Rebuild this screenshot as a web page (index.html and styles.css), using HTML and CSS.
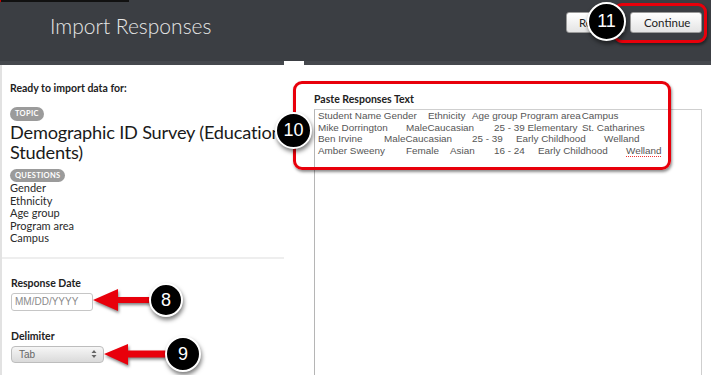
FILE: index.html
```html
<!DOCTYPE html>
<html lang="en">

<head>
  <meta charset="UTF-8">
  <meta name="viewport" content="width=device-width, initial-scale=1.0">
  <title>Import Responses</title>
  <link rel="stylesheet" href="styles.css">
</head>

<body>
  <header class="topbar">
    <h1>Import Responses</h1>
    <div class="actions">
      <button class="btn btn-reset">Reset</button>
      <button class="btn btn-continue">Continue</button>
    </div>
  </header>

  <main class="layout">
    <aside class="summary">
      <section class="target">
        <p class="lead">Ready to import data for:</p>
        <span class="pill">TOPIC</span>
        <h2 class="survey">Demographic ID Survey (Education Students)</h2>
        <span class="pill pill-questions">QUESTIONS</span>
        <ul class="questions">
          <li>Gender</li>
          <li>Ethnicity</li>
          <li>Age group</li>
          <li>Program area</li>
          <li>Campus</li>
        </ul>
      </section>

      <section class="options">
        <label class="field-label" for="response-date">Response Date</label>
        <input class="date-input" id="response-date" type="text" placeholder="MM/DD/YYYY">

        <label class="field-label field-label-delim">Delimiter</label>
        <div class="select">
          <span>Tab</span>
          <svg class="select-arrows" width="6" height="10" viewBox="0 0 6 10">
            <path d="M3 1 L5.5 4 H0.5 Z M3 9 L5.5 6 H0.5 Z" fill="#666" />
          </svg>
        </div>
      </section>
    </aside>

    <section class="paste">
      <label class="field-label">Paste Responses Text</label>
      <div class="textbox">Student Name Gender	Ethnicity	Age group Program area<span class="snug">Campus</span>
Mike Dorrington	MaleCaucasian	25 - 39 Elementary	St. Catharines
Ben Irvine	MaleCaucasian	25 - 39	Early Childhood	Welland
Amber Sweeny	Female	Asian	16 - 24	Early Childhood	<span class="misspelt">Welland</span></div>
    </section>
  </main>

  <!-- tutorial callouts drawn over the page -->
  <div class="callout-box box-paste"></div>
  <div class="callout-box box-continue"></div>

  <svg class="arrow arrow-date" width="64" height="28" viewBox="0 0 64 28">
    <polygon points="3,14 28,3 28,11 62,11 62,17 28,17 28,25" fill="#e8000b" />
  </svg>
  <svg class="arrow arrow-delim" width="72" height="28" viewBox="0 0 72 28">
    <polygon points="3,14 27,4 27,10.5 70,10.5 70,17.5 27,17.5 27,25" fill="#e8000b" />
  </svg>

  <span class="badge badge-8">8</span>
  <span class="badge badge-9">9</span>
  <span class="badge badge-10">10</span>
  <span class="badge badge-11">11</span>
</body>

</html>
```

FILE: styles.css
```css
* {
  box-sizing: border-box;
}

html,
body {
  margin: 0;
  height: 100%;
  overflow: hidden;
}

body {
  font-family: Lato, "Open Sans", sans-serif;
  color: #222;
  background: #fff;
  position: relative;
}

/* header */
.topbar {
  position: relative;
  height: 65px;
  background: #3b3e43;
  display: flex;
  justify-content: space-between;
  align-items: flex-start;
  padding: 0 9px 0 50px;
}

.topbar::before {
  content: "";
  position: absolute;
  left: 0;
  top: 0;
  width: 128px;
  height: 2px;
  background: #111;
  border-left: 1px solid #c00;
}

.topbar::after {
  content: "";
  position: absolute;
  left: 0;
  right: 0;
  bottom: 0;
  height: 4px;
  background: linear-gradient(to right, #45484d 284px, #fff 284px 304px, #45484d 304px);
}

.topbar h1 {
  margin: 0;
  padding-top: 13px;
  font-size: 21px;
  font-weight: 300;
  line-height: 26px;
  color: #e6e6e6;
}

.actions {
  display: flex;
  gap: 5px;
  padding-top: 12px;
}

.btn {
  height: 21px;
  padding: 0 13px;
  font-family: Lato, sans-serif;
  font-size: 11.5px;
  color: #222;
  background: linear-gradient(#ffffff, #e4e4e4);
  border: 1px solid #9a9a9a;
  border-radius: 3px;
}

.btn-reset {
  width: 59px;
  text-align: left;
  padding-left: 12px;
}

.btn-continue {
  width: 72px;
}

/* body columns */
.layout {
  display: grid;
  grid-template-columns: 284px 1fr;
  height: calc(100% - 65px);
  overflow: hidden;
}

.summary {
  border-left: 2px solid #e2e2e2;
}

.target {
  padding: 16px 10px 12px 8px;
  border-bottom: 2px solid #eeeeee;
}

.lead {
  margin: 0 0 12px;
  font-size: 10.5px;
  font-weight: 700;
  line-height: 14px;
}

.pill {
  display: block;
  width: fit-content;
  height: 14px;
  padding: 0 5px;
  border-radius: 7px;
  background: #9b9b9b;
  color: #fff;
  font-size: 7.5px;
  font-weight: 700;
  line-height: 14px;
  letter-spacing: 0.3px;
}

.survey {
  margin: 1px -24px 7px 0;
  font-size: 18.2px;
  font-weight: 400;
  line-height: 20px;
  letter-spacing: -0.2px;
  color: #1a1a1a;
}

.pill-questions {
  height: 13px;
  line-height: 13px;
}

.questions {
  list-style: none;
  margin: 0;
  padding: 0;
  font-size: 11px;
  line-height: 12.5px;
  color: #2a2a2a;
}

.options {
  padding: 17px 10px 0 9px;
}

.field-label {
  display: block;
  font-size: 10.5px;
  font-weight: 700;
  line-height: 14px;
}

.date-input {
  display: block;
  margin-top: 3px;
  width: 82px;
  height: 18px;
  padding: 0 3px;
  border: 1px solid #c6c6c6;
  border-radius: 3px;
  font-family: "Liberation Sans", sans-serif;
  font-size: 10px;
}

.date-input::placeholder {
  color: #8a8a8a;
}

.field-label-delim {
  margin-top: 18px;
}

.select {
  display: flex;
  justify-content: space-between;
  align-items: center;
  margin-top: 3px;
  width: 93px;
  height: 17px;
  padding: 0 6px 0 7px;
  border: 1px solid #bdbdbd;
  border-radius: 4px;
  background: linear-gradient(#f6f6f6, #dadada);
  font-family: "Liberation Sans", sans-serif;
  font-size: 10px;
  color: #666;
}

.paste {
  padding: 27px 9px 0 30px;
}

.textbox {
  margin-top: 3px;
  height: 320px;
  padding: 0 3px;
  border: 1px solid #cfcfcf;
  border-left-color: #b5b5b5;
  font-family: "Liberation Sans", Arial, sans-serif;
  font-size: 9.9px;
  line-height: 11.7px;
  color: #555;
  white-space: pre;
  tab-size: 22px;
}

.snug {
  margin-left: 1px;
}

.misspelt {
  text-decoration: underline dotted #e33;
  text-underline-offset: 2px;
}

/* callouts */
.callout-box {
  position: absolute;
  border: 3px solid #e8000b;
  border-radius: 9px;
  box-shadow: 1px 2px 3px rgba(0, 0, 0, 0.45);
}

.box-paste {
  left: 293px;
  top: 81px;
  width: 378px;
  height: 89px;
}

.box-continue {
  left: 613px;
  top: 3px;
  width: 94px;
  height: 40px;
}

.arrow {
  position: absolute;
  filter: drop-shadow(1px 2px 1.5px rgba(0, 0, 0, 0.5));
}

.arrow-date {
  left: 90px;
  top: 286px;
}

.arrow-delim {
  left: 101px;
  top: 340px;
}

.badge {
  position: absolute;
  display: flex;
  align-items: center;
  justify-content: center;
  border-radius: 50%;
  background: #000;
  border: 2.5px solid #fff;
  box-shadow: 1px 3px 4px rgba(0, 0, 0, 0.5);
  color: #fff;
  font-family: "Liberation Sans", Arial, sans-serif;
  font-size: 18px;
}

.badge-8 {
  left: 149px;
  top: 283px;
  width: 34px;
  height: 34px;
}

.badge-9 {
  left: 165px;
  top: 336px;
  width: 36px;
  height: 36px;
}

.badge-10 {
  left: 275px;
  top: 112px;
  width: 37px;
  height: 37px;
}

.badge-11 {
  left: 587px;
  top: 2px;
  width: 39px;
  height: 39px;
}
```
